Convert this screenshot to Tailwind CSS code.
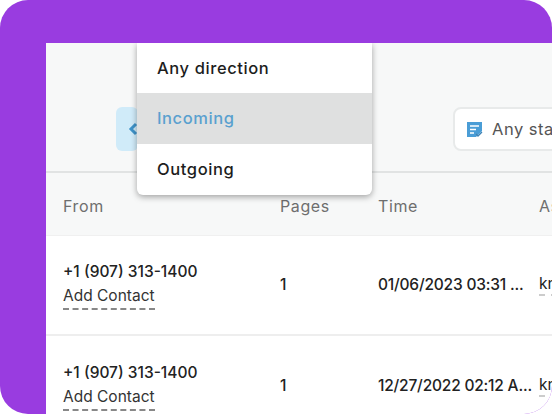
<!DOCTYPE html>
<html lang="en">
<head>
  <meta charset="UTF-8" />
  <title>Faxes</title>
  <script src="https://cdn.jsdelivr.net/npm/@tailwindcss/browser@4"></script>
</head>
<body class="bg-white font-['Inter',sans-serif] overflow-hidden">
<div class="w-[552px] h-[414px] bg-[#993ce0] rounded-[28px] pl-[46px] pt-[43px] overflow-hidden">
  <div class="relative w-[506px] h-[371px] bg-white overflow-hidden">

    <!-- toolbar -->
    <div class="h-[130px] bg-[#f7f8f8] border-b-2 border-[#e1e3e3] pt-[64px] pl-[70px] flex items-start whitespace-nowrap">
      <button class="w-[40px] h-[44px] bg-[#d0ebf9] rounded-md flex items-center pl-[12px]">
        <svg width="10" height="14" viewBox="0 0 10 14"><path d="M8 2 3 7l5 5" fill="none" stroke="#3f93c9" stroke-width="3"/></svg>
      </button>
      <div class="ml-[315px] w-[120px] h-[44px] bg-white border-2 border-[#e8eaea] rounded-lg flex items-center pl-[11px] gap-[9px] shrink-0">
        <svg width="17" height="17" viewBox="0 0 17 17" class="shrink-0">
          <path d="M1 1h15v9l-6 6H1z" fill="#4a9dd6"/>
          <path d="M4 5h9M4 8.500h6M4 12h4" stroke="#fff" stroke-width="1.500"/>
          <path d="M10 13l2 2 4-4" fill="none" stroke="#3f83b5" stroke-width="1.300"/>
        </svg>
        <span class="text-[16.500px] text-[#555] tracking-[0.5px]">Any status</span>
      </div>
    </div>

    <!-- header row -->
    <div class="h-[63px] bg-[#f7f8f8] border-b border-[#f0f0f0] grid grid-cols-[217px_98px_161px_30px] pl-[17px] pt-[21px] text-[16px] text-[#6e6e6e] tracking-[0.6px]">
      <div>From</div>
      <div>Pages</div>
      <div>Time</div>
      <div>As</div>
    </div>

    <!-- rows -->
    <div class="h-[100px] border-b-2 border-[#eeeeee] grid grid-cols-[217px_98px_161px_30px] pl-[17px] items-center text-[#222] text-[15.500px]">
      <div>
        <div class="leading-[24px] font-medium">+1 (907) 313-1400</div>
        <div class="leading-[24px] w-fit border-b-2 border-dashed border-[#888] text-[#333]">Add Contact</div>
      </div>
      <div class="font-medium">1</div>
      <div class="font-medium whitespace-nowrap tracking-[-0.2px]">01/06/2023 03:31 ...</div>
      <div class="w-fit border-b-2 border-dashed border-[#ccc] leading-[20px]">kn</div>
    </div>
    <div class="h-[100px] grid grid-cols-[217px_98px_161px_30px] pl-[17px] items-center text-[#222] text-[15.500px]">
      <div>
        <div class="leading-[24px] font-medium">+1 (907) 313-1400</div>
        <div class="leading-[24px] w-fit border-b-2 border-dashed border-[#888] text-[#333]">Add Contact</div>
      </div>
      <div class="font-medium">1</div>
      <div class="font-medium whitespace-nowrap tracking-[-0.2px]">12/27/2022 02:12 A...</div>
      <div class="w-fit border-b-2 border-dashed border-[#ccc] leading-[20px]">kn</div>
    </div>

    <!-- direction menu -->
    <div class="absolute left-[91px] top-0 w-[235px] h-[152px] bg-white rounded-b-md shadow-[0_2px_6px_rgba(0,0,0,0.35)] text-[16.500px] tracking-[0.6px]">
      <div class="h-[50px] flex items-center pl-[20px] text-[#1d1d1d] font-medium">Any direction</div>
      <div class="h-[51px] flex items-center pl-[20px] bg-[#dfe0e0] text-[#5aa0cf] font-medium">Incoming</div>
      <div class="h-[51px] flex items-center pl-[20px] text-[#1d1d1d] font-medium">Outgoing</div>
    </div>
  </div>
</div>
</body>
</html>
